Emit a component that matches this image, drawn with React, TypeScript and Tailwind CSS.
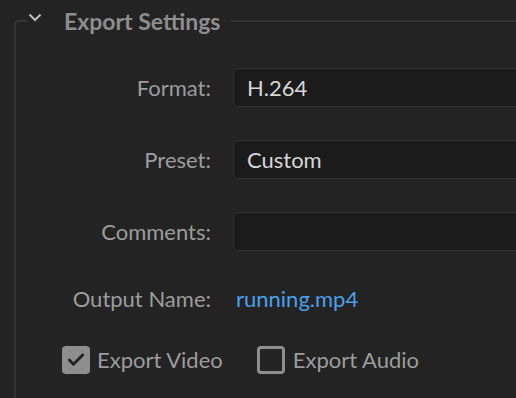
import { Check } from "lucide-react";

const FONT = "font-['Lato','Liberation_Sans',sans-serif]";

function Field({ label, value }: { label: string; value?: string }) {
  return (
    <div className="flex items-center">
      <div className="w-[195px] shrink-0 text-right text-[22px] text-[#9c9c9c]">{label}</div>
      <div className="ml-[22px] flex h-[39px] w-[320px] shrink-0 items-center rounded-[5px] border border-[#303030] bg-[#1b1b1b] pl-[13px] text-[22px] text-[#d6d6d6]">
        {value}
      </div>
    </div>
  );
}

export default function App() {
  return (
    <div className={`h-[398px] w-[516px] overflow-hidden bg-[#232323] ${FONT}`}>
      <fieldset className="ml-[14px] min-w-0 rounded-tl-[4px] border-t-2 border-l-2 border-[#333333] p-0 pb-[60px]">
        <legend className="ml-[12px] flex h-[42px] items-center pr-[11px]">
          <svg width="14" height="9" viewBox="0 0 14 9" className="mt-[-7px]" fill="none">
            <path d="M1.5 1.5 L7 7 L12.5 1.5" stroke="#bdbdbd" strokeWidth="2" />
          </svg>
          <span className="ml-[22px] text-[23px] font-bold text-[#8d8d8d]">Export Settings</span>
        </legend>

        <div className="flex flex-col gap-[33px] pt-[26px]">
          <Field label="Format:" value="H.264" />
          <Field label="Preset:" value="Custom" />
          <Field label="Comments:" />
        </div>

        <div className="mt-[31px] flex items-center">
          <div className="w-[195px] shrink-0 text-right text-[22px] text-[#9c9c9c]">Output Name:</div>
          <div className="ml-[25px] text-[22px] text-[#4b9fea]">running.mp4</div>
        </div>

        <div className="mt-[28px] flex items-center pl-[46px] text-[22px] text-[#9c9c9c]">
          <span className="flex h-[28px] w-[28px] items-center justify-center rounded-[4px] bg-[#8e8e8e]">
            <Check size={20} strokeWidth={3.5} color="#232323" />
          </span>
          <span className="ml-[7px]">Export Video</span>
          <span className="ml-[34px] h-[28px] w-[28px] rounded-[4px] border-[3px] border-[#8e8e8e]" />
          <span className="ml-[8px]">Export Audio</span>
        </div>
      </fieldset>
    </div>
  );
}
